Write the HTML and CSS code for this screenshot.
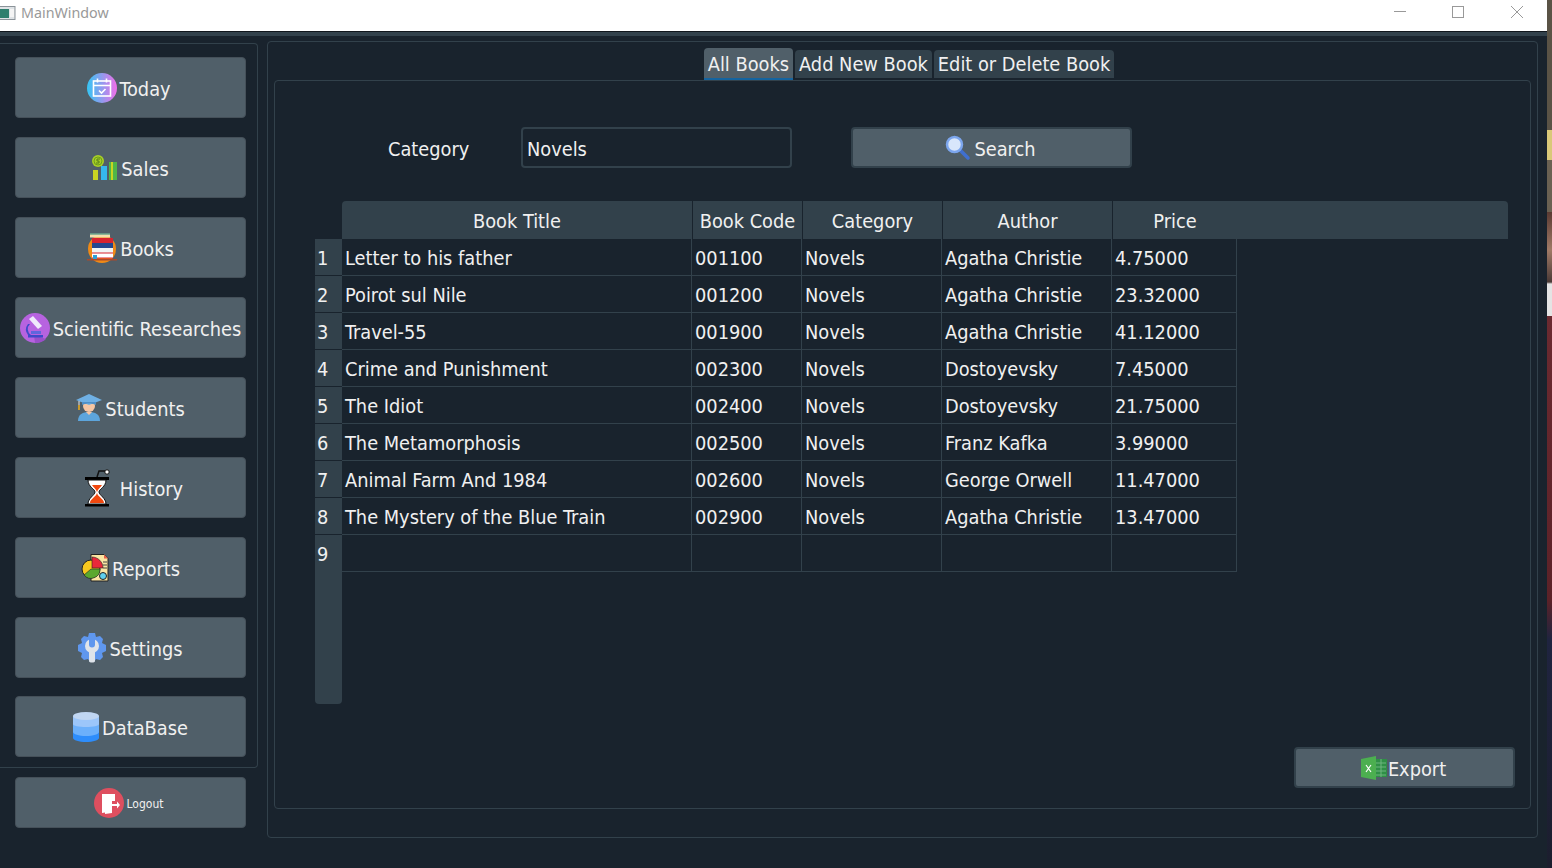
FILE: index.html
```html
<!DOCTYPE html>
<html lang="en">
<head>
  <meta charset="UTF-8" />
  <title>MainWindow</title>
  <link rel="stylesheet" href="styles.css">
</head>
<body>

<div class="window">
  <header class="titlebar">
    <svg class="app-icon" width="16" height="16" viewBox="0 0 16 16">
      <rect x="-1" y="2.500" width="16" height="13" fill="#dfe3e6" stroke="#8b9399"/>
      <rect x="0" y="5" width="9" height="9" fill="#2f7f6e"/>
      <rect x="10" y="5" width="4" height="8" fill="#f4f4f4"/>
    </svg>
    <span class="title">MainWindow</span>
    <div class="winbtns">
      <svg width="14" height="14" viewBox="0 0 14 14"><path d="M1 6.500H13" stroke="#999" fill="none"/></svg>
      <svg width="14" height="14" viewBox="0 0 14 14"><rect x="1.500" y="1.500" width="11" height="11" stroke="#999" fill="none"/></svg>
      <svg class="win-close" width="14" height="14" viewBox="0 0 14 14"><path d="M1 1L13 13M13 1L1 13" stroke="#999" fill="none"/></svg>
    </div>
  </header>
  <div class="strip"></div>

  <main class="content">
    <aside class="side">
      <nav class="side-group">
        <button class="btn nav today">
          <svg width="30" height="30" viewBox="0 0 30 30">
            <defs><linearGradient id="g1" x1="0" x2="1"><stop offset="0" stop-color="#34c6f4"/><stop offset="1" stop-color="#f06ee8"/></linearGradient></defs>
            <circle cx="15" cy="15" r="15" fill="url(#g1)"/>
            <rect x="6.500" y="8" width="17" height="15" fill="none" stroke="#fff" stroke-width="1.600"/>
            <path d="M6.500 12.500H23.500M10.500 5.500V9.500M19.500 5.500V9.500" stroke="#fff" stroke-width="1.600"/>
            <path d="M12 17.500l2.500 2.500 4-4" fill="none" stroke="#fff" stroke-width="1.600"/>
          </svg>
          <span>Today</span>
        </button>
        <button class="btn nav">
          <svg width="26" height="26" viewBox="0 0 26 26">
            <rect x="1" y="15" width="5" height="10" fill="#c9d422"/>
            <rect x="9" y="11" width="6" height="14" fill="#35b8ee"/>
            <rect x="17" y="7" width="8" height="18" fill="#4fb548"/>
            <path d="M19 7h2v18h-2z" fill="#c9d422"/>
            <circle cx="6" cy="6" r="6" fill="#a8cf26"/>
            <circle cx="6" cy="6" r="4" fill="none" stroke="#6f9f1c"/>
            <path d="M8 4H5v2h2v2H4" fill="none" stroke="#55801a"/>
          </svg>
          <span>Sales</span>
        </button>
        <button class="btn nav">
          <svg width="30" height="30" viewBox="0 0 30 30">
            <circle cx="15" cy="16" r="14" fill="#f08a16"/>
            <rect x="3" y="0.500" width="20" height="4" fill="#f5dfae"/>
            <path d="M3 0.500H23V1.500H3z" fill="#27897d"/>
            <rect x="5" y="5" width="21" height="5" fill="#d8232f"/>
            <rect x="5" y="10" width="21" height="5" fill="#25478f"/>
            <rect x="5" y="15" width="21" height="5" fill="#f1f5f5"/>
            <rect x="5" y="20" width="21" height="5" fill="#fff"/>
            <path d="M5 20H26M5 25H26" stroke="#d8232f"/>
            <rect x="6" y="22" width="4" height="4" fill="#2f9fd8"/>
            <rect x="0" y="26" width="30" height="1.500" fill="#a84a2c"/>
          </svg>
          <span>Books</span>
        </button>
        <button class="btn nav">
          <svg width="30" height="30" viewBox="0 0 30 30">
            <circle cx="15" cy="15" r="15" fill="#b763e0"/>
            <path d="M14 22L26 26A15 15 0 0 1 15 30z" fill="#9a4fc9"/>
            <path d="M9 6L13 3 22 13 18 16z" fill="#efe9fb"/>
            <path d="M10 11a7 7 0 0 0 1 11h12v2.500H8v-2.500a9 9 0 0 1 0-11z" fill="#3f49c9"/>
            <rect x="11" y="18" width="10" height="3" fill="#5f66dd"/>
          </svg>
          <span>Scientific Researches</span>
        </button>
        <button class="btn nav">
          <svg width="26" height="28" viewBox="0 0 26 28">
            <path d="M2 27c0-7 5-9 11-9s11 2 11 9z" fill="#5da5dc"/>
            <circle cx="13" cy="12" r="6" fill="#f7c6a3"/>
            <path d="M10 18h6l-3 3z" fill="#f7c6a3"/>
            <path d="M13 0L26 6 13 11 0 6z" fill="#6fb0e4"/>
            <path d="M6 8h14v3c-4-2-10-2-14 0z" fill="#4f90c8"/>
            <path d="M3 7V14" stroke="#e8e8e8"/>
            <rect x="2" y="11" width="2" height="5" fill="#c99a2a"/>
          </svg>
          <span>Students</span>
        </button>
        <button class="btn nav history">
          <svg width="26" height="38" viewBox="0 0 26 38">
            <path d="M13 8L15 2H21" fill="none" stroke="#111" stroke-width="1.500"/>
            <circle cx="23" cy="3" r="2.200" fill="#fff" stroke="#111"/>
            <rect x="1" y="8" width="24" height="3" fill="#000"/>
            <rect x="1" y="35" width="24" height="2.500" fill="#000"/>
            <path d="M4 11H22C22 18 15 20 15 23 15 26 22 29 22 35H4C4 29 11 26 11 23 11 20 4 18 4 11z" fill="#fff" stroke="#111"/>
            <path d="M8 16H18C16 19 14 20 13 23 12 20 10 19 8 16zM13 24C14 28 20 30 20 34H6C6 30 12 28 13 24z" fill="#f0480f"/>
          </svg>
          <span>History</span>
        </button>
        <button class="btn nav">
          <svg width="28" height="28" viewBox="0 0 28 28">
            <path d="M10 0.500H23L27 4.500V27H10z" fill="#fbe6a2" stroke="#222"/>
            <path d="M23 0.500V4.500H27z" fill="#e8604a"/>
            <path d="M22 8h4M22 11h4M22 14h4" stroke="#444"/>
            <circle cx="10" cy="15" r="9" fill="#f7c81e" stroke="#222"/>
            <path d="M11 14V3C17 3 22 8 22 14z" fill="#e8283a" stroke="#222" stroke-width=".6"/>
            <path d="M10 15L19 15A9 9 0 0 1 3 21z" fill="#5aa82e" stroke="#222" stroke-width=".6"/>
            <circle cx="22" cy="22" r="3.500" fill="#5fd0ee" stroke="#222"/>
          </svg>
          <span>Reports</span>
        </button>
        <button class="btn nav">
          <svg width="28" height="30" viewBox="0 0 28 30">
            <path d="M11 0h6l1 4 4-1 3 3-1 4 4 2v6l-4 2 1 4-3 3-4-1-2 3h-4l-2-3-4 1-3-3 1-4-4-2v-6l4-2-1-4 3-3 4 1z" fill="#5f97ee"/>
            <circle cx="14" cy="13" r="7" fill="#dfe4ea"/>
            <path d="M11 5h6v6.500a3 3 0 0 1-6 0z" fill="#5f97ee"/>
            <path d="M11 18h6v10c0 2-6 2-6 0z" fill="#dfe4ea"/>
          </svg>
          <span>Settings</span>
        </button>
        <button class="btn nav">
          <svg width="26" height="30" viewBox="0 0 26 30">
            <path d="M0 4V26C0 28 6 30 13 30S26 28 26 26V4z" fill="#2e8dfb"/>
            <path d="M0 4V20C0 22 6 24 13 24S26 22 26 20V4z" fill="#6cb0fb"/>
            <path d="M0 4V12C0 14 6 15 13 15S26 14 26 12V4z" fill="#9cc6fa"/>
            <ellipse cx="13" cy="4" rx="13" ry="4" fill="#c0d6f2"/>
          </svg>
          <span>DataBase</span>
        </button>
      </nav>
      <button class="btn logout">
        <svg width="30" height="30" viewBox="0 0 30 30">
          <circle cx="15" cy="15" r="15" fill="#de4f5f"/>
          <path d="M8 6H21V13H18V10H14V24L8 25z" fill="#fff"/>
          <path d="M11 7L18 9V25L11 26z" fill="#fff"/>
          <path d="M17 16H23V13.500L26 17 23 20.500V18H17z" fill="#fff"/>
        </svg>
        <span>Logout</span>
      </button>
    </aside>

    <section class="main-group">
      <div class="tabs">
        <div class="tab active">All Books</div>
        <div class="tab">Add New Book</div>
        <div class="tab">Edit or Delete Book</div>
      </div>
      <div class="pane">
        <div class="search-row">
          <label class="cat-label">Category</label>
          <div class="input">Novels</div>
          <button class="btn search">
            <svg width="26" height="26" viewBox="0 0 26 26">
              <path d="M15 15L23 23" stroke="#3f6fd0" stroke-width="3.500" stroke-linecap="round"/>
              <circle cx="9.500" cy="9.500" r="7.500" fill="#d8e6fb" stroke="#7ca6ee" stroke-width="2.500"/>
            </svg>
            <span>Search</span>
          </button>
        </div>

        <div class="view">
          <div class="corner"></div>
          <div class="head-row">
            <div class="hcell c1">Book Title</div>
            <div class="hcell c2">Book Code</div>
            <div class="hcell c3">Category</div>
            <div class="hcell c4">Author</div>
            <div class="hcell c5">Price</div>
          </div>
          <div class="row-nums">
            <div class="num">1</div><div class="num">2</div><div class="num">3</div>
            <div class="num">4</div><div class="num">5</div><div class="num">6</div>
            <div class="num">7</div><div class="num">8</div><div class="num">9</div>
          </div>
          <table class="books">
            <colgroup>
              <col class="c1"><col class="c2"><col class="c3"><col class="c4"><col class="c5">
            </colgroup>
            <tbody>
              <tr><td>Letter to his father</td><td>001100</td><td>Novels</td><td>Agatha Christie</td><td>4.75000</td></tr>
              <tr><td>Poirot sul Nile</td><td>001200</td><td>Novels</td><td>Agatha Christie</td><td>23.32000</td></tr>
              <tr><td>Travel-55</td><td>001900</td><td>Novels</td><td>Agatha Christie</td><td>41.12000</td></tr>
              <tr><td>Crime and Punishment</td><td>002300</td><td>Novels</td><td>Dostoyevsky</td><td>7.45000</td></tr>
              <tr><td>The Idiot</td><td>002400</td><td>Novels</td><td>Dostoyevsky</td><td>21.75000</td></tr>
              <tr><td>The Metamorphosis</td><td>002500</td><td>Novels</td><td>Franz Kafka</td><td>3.99000</td></tr>
              <tr><td>Animal Farm And 1984</td><td>002600</td><td>Novels</td><td>George Orwell</td><td>11.47000</td></tr>
              <tr><td>The Mystery of the Blue Train</td><td>002900</td><td>Novels</td><td>Agatha Christie</td><td>13.47000</td></tr>
              <tr><td></td><td></td><td></td><td></td><td></td></tr>
            </tbody>
          </table>
        </div>

        <div class="export-row">
          <button class="btn export">
            <svg width="26" height="24" viewBox="0 0 26 24">
              <rect x="14" y="3" width="12" height="18" fill="#2f8f46"/>
              <path d="M15 7H25M15 11H25M15 15H25M15 19H25M20 3V21" stroke="#6fb57f"/>
              <path d="M0 3L15 0V24L0 21z" fill="#4caf50"/>
              <path d="M5 9L10 16M10 9L5 16" stroke="#fff" stroke-width="1.200"/>
            </svg>
            <span>Export</span>
          </button>
        </div>
      </div>
    </section>
  </main>
</div>
<div class="desktop-edge"></div>

</body>
</html>
```

FILE: styles.css
```css
html, body {
  margin: 0;
  height: 100%;
  overflow: hidden;
}

body {
  background: #2a2024;
  font-family: "DejaVu Sans", Tahoma, sans-serif;
  font-stretch: condensed;
  display: flex;
  color: #f0f0f0;
}

.window {
  width: 1547px;
  height: 868px;
  background: #19232d;
  display: flex;
  flex-direction: column;
  flex: none;
}

.desktop-edge {
  flex: 1;
  background: linear-gradient(#5a5346 0, #5a5346 130px, #d9c878 130px, #d9c878 160px, #6a6152 160px, #6a6152 212px, #5a3a32 212px, #a07a66 250px, #4a3a36 282px, #e4e4e4 284px, #e4e4e4 316px, #6b2a30 316px, #5c2228 600px, #1f2440 640px, #1c1e2e 868px);
}

/* title bar */
.titlebar {
  height: 32px;
  background: #fff;
  border-bottom: 1px solid #10161c;
  box-sizing: border-box;
  display: flex;
  align-items: center;
  padding-bottom: 7px;
  flex: none;
}

.title {
  font-family: "Noto Sans", sans-serif;
  font-stretch: normal;
  font-size: 14.3px;
  color: #999;
  margin-left: 5px;
}

.winbtns {
  margin-left: auto;
  display: flex;
  gap: 44px;
  padding-right: 23px;
}

.win-close {
  margin-left: 1px;
}

.strip {
  height: 4px;
  background: #32414b;
  flex: none;
}

.content {
  flex: 1;
  display: flex;
  align-items: flex-start;
  min-height: 0;
}

/* buttons */
.btn {
  display: flex;
  align-items: center;
  justify-content: center;
  gap: 3px;
  background: #505f69;
  border: 1px solid #455059;
  border-radius: 4px;
  color: #f0f0f0;
  font-family: inherit;
  font-stretch: condensed;
  font-size: 19.8px;
  padding: 0;
  box-sizing: border-box;
}

.btn span {
  padding-top: 3px;
}

/* left column */
.side {
  width: 258px;
  flex: none;
  padding-top: 7px;
}

.side-group {
  height: 725px;
  box-sizing: border-box;
  border: 1px solid #32414b;
  border-left: none;
  border-radius: 0 4px 4px 0;
  padding: 13px 11px 0 15px;
  display: flex;
  flex-direction: column;
  gap: 20px;
}

.nav {
  height: 61px;
  margin-bottom: -1px;
  flex: none;
}

.nav.today {
  gap: 2px;
  padding-right: 3px;
}

.nav.history {
  gap: 10px;
  padding-left: 6px;
}

.side-group .nav:last-child {
  margin-top: -1px;
}

.logout {
  width: 231px;
  height: 51px;
  margin: 9px 0 0 15px;
  padding-right: 4px;
  font-size: 12px;
}

/* right group */
.main-group {
  width: 1271px;
  height: 797px;
  margin: 5px 0 0 9px;
  box-sizing: border-box;
  border: 1px solid #32414b;
  border-radius: 4px;
  padding: 6px 6px 0 6px;
  flex: none;
}

.tabs {
  display: flex;
  justify-content: center;
  align-items: flex-start;
  gap: 2px;
  height: 32px;
  padding-left: 13px;
}

.tab {
  background: #32414b;
  height: 28px;
  margin-top: 2px;
  line-height: 30px;
  padding: 0 4px;
  font-size: 19.8px;
  border-radius: 4px 4px 0 0;
  white-space: nowrap;
}

.tab.active {
  background: #505f69;
  height: 32px;
  margin-top: 0;
  line-height: 33px;
  box-sizing: border-box;
  border-bottom: 2px solid #1464a0;
}

.pane {
  height: 729px;
  box-sizing: border-box;
  border: 1px solid #32414b;
  border-radius: 4px;
  display: flex;
  flex-direction: column;
  padding: 46px 15px 0 40px;
}

.search-row {
  display: flex;
  align-items: center;
  height: 41px;
}

.cat-label {
  width: 133px;
  margin-left: 73px;
  padding-top: 4px;
  font-size: 19.8px;
}

.input {
  width: 271px;
  height: 41px;
  box-sizing: border-box;
  border: 2px solid #32414b;
  border-radius: 4px;
  padding-left: 4px;
  font-size: 19.8px;
  line-height: 41px;
}

.search {
  width: 281px;
  height: 41px;
  margin-left: 59px;
  padding-right: 2px;
  border: 2px solid #32414b;
}

/* book table */
.view {
  display: grid;
  grid-template-columns: 27px 1166px;
  grid-template-rows: 38px 465px;
  margin-top: 33px;
}

.head-row {
  display: flex;
  background: #32414b;
  border-radius: 4px 4px 0 0;
}

.hcell {
  font-size: 19.8px;
  line-height: 42px;
  text-align: center;
  box-sizing: border-box;
  border-right: 1px solid #19232d;
}

.hcell.c1 { width: 351px; }
.hcell.c2 { width: 110px; }
.hcell.c3 { width: 140px; }
.hcell.c4 { width: 170px; }
.hcell.c5 { width: 124px; border-right: none; }

.row-nums {
  background: #32414b;
  border-radius: 0 0 4px 4px;
}

.num {
  height: 37px;
  box-sizing: border-box;
  border-bottom: 1px solid #19232d;
  padding-left: 2px;
  font-size: 19.8px;
  line-height: 40px;
}

.num:last-child {
  border-bottom: none;
  line-height: 39px;
}

.books {
  border-collapse: separate;
  border-spacing: 0;
  table-layout: fixed;
  width: 895px;
  align-self: start;
}

col.c1 { width: 350px; }
col.c2 { width: 110px; }
col.c3 { width: 140px; }
col.c4 { width: 170px; }
col.c5 { width: 125px; }

.books td {
  height: 37px;
  box-sizing: border-box;
  padding: 3px 0 0 3px;
  font-size: 19.8px;
  line-height: 33px;
  white-space: nowrap;
  border-right: 1px solid #32414b;
  border-bottom: 1px solid #32414b;
}

.export-row {
  display: flex;
  justify-content: flex-end;
  margin-top: 43px;
}

.export {
  width: 221px;
  height: 41px;
  gap: 1px;
  padding-right: 2px;
  border: 2px solid #32414b;
}
```
